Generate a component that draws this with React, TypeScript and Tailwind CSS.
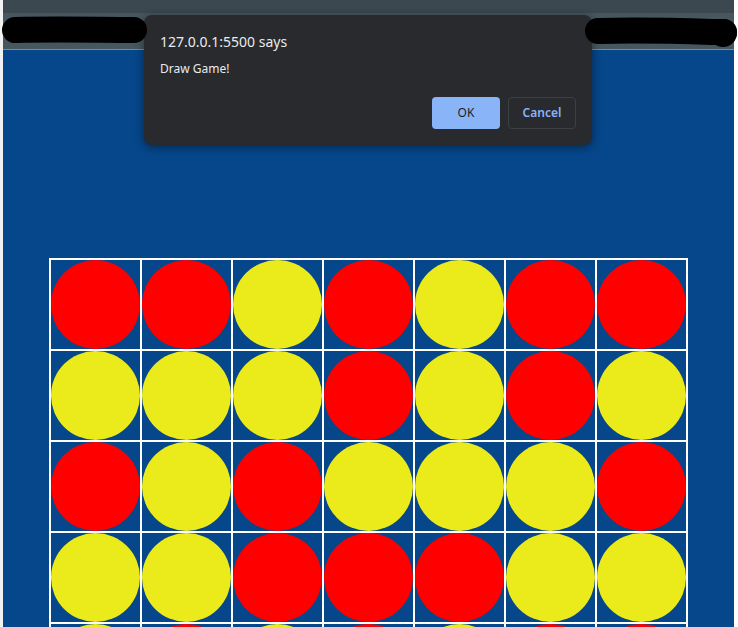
import { FC } from "react";

type Disc = "R" | "Y";

const board: Disc[][] = [
  ["R", "R", "Y", "R", "Y", "R", "R"],
  ["Y", "Y", "Y", "R", "Y", "R", "Y"],
  ["R", "Y", "R", "Y", "Y", "Y", "R"],
  ["Y", "Y", "R", "R", "R", "Y", "Y"],
  ["Y", "R", "Y", "R", "Y", "R", "R"],
  ["R", "Y", "R", "Y", "R", "Y", "Y"],
];

const Board: FC = () => (
  <div className="mx-auto grid w-max grid-cols-[repeat(7,91px)] border border-white">
    {board.flat().map((d, i) => (
      <div key={i} className="h-[91px] w-[91px] border border-white">
        <div
          className={`h-[89px] w-[89px] rounded-full ${
            d === "R" ? "bg-[#ff0000]" : "bg-[#ebeb1c]"
          }`}
        />
      </div>
    ))}
  </div>
);

const AlertDialog: FC = () => (
  <div
    className="absolute left-[144px] top-[15px] z-10 h-[130px] w-[448px] rounded-[8px] bg-[#292a2d] px-4 shadow-[0_2px_10px_rgba(0,0,0,0.45)]"
    style={{ fontFamily: '"Noto Sans", "Open Sans", sans-serif' }}
  >
    <div className="pt-[17px] text-[14px] leading-[20px] text-[#e8eaed]">
      127.0.0.1:5500 says
    </div>
    <div className="pt-[9px] text-[12px] leading-[16px] text-[#e8eaed]">
      Draw Game!
    </div>
    <div className="mt-[20px] flex justify-end gap-2">
      <button className="h-[32px] w-[68px] rounded-[4px] bg-[#8ab4f8] text-[12px] text-[#202124]">
        OK
      </button>
      <button className="h-[32px] w-[68px] rounded-[4px] border border-[#3c4043] bg-transparent text-[12px] font-semibold text-[#8ab4f8]">
        Cancel
      </button>
    </div>
  </div>
);

const Scribbles: FC = () => (
  <svg
    className="pointer-events-none absolute left-0 top-0 z-20"
    width="738"
    height="60"
    viewBox="0 0 738 60"
  >
    <path
      d="M15 30 C60 29 100 30 134 30"
      stroke="#000"
      strokeWidth="26"
      strokeLinecap="round"
      fill="none"
    />
    <path
      d="M598 31 C640 30 680 31 712 32 L724 32"
      stroke="#000"
      strokeWidth="26"
      strokeLinecap="round"
      fill="none"
    />
    <circle cx="723" cy="33" r="14" fill="#000" />
  </svg>
);

export default function App() {
  return (
    <div className="relative flex h-[627px] w-[738px] overflow-hidden bg-white">
      <div className="w-[3px] shrink-0 bg-[#f2f2f2]" />
      <div className="flex w-[731px] shrink-0 flex-col">
        <div className="h-[13px] shrink-0 bg-[#3b484f]" />
        <div className="h-[36px] shrink-0 bg-[#46575f]" />
        <div className="h-[1px] shrink-0 bg-[#7d8b91]" />
        <div className="flex-1 shrink-0 bg-[#06468a] pt-[208px]">
          <Board />
        </div>
      </div>
      <div className="w-[4px] shrink-0 bg-white" />
      <AlertDialog />
      <Scribbles />
    </div>
  );
}
